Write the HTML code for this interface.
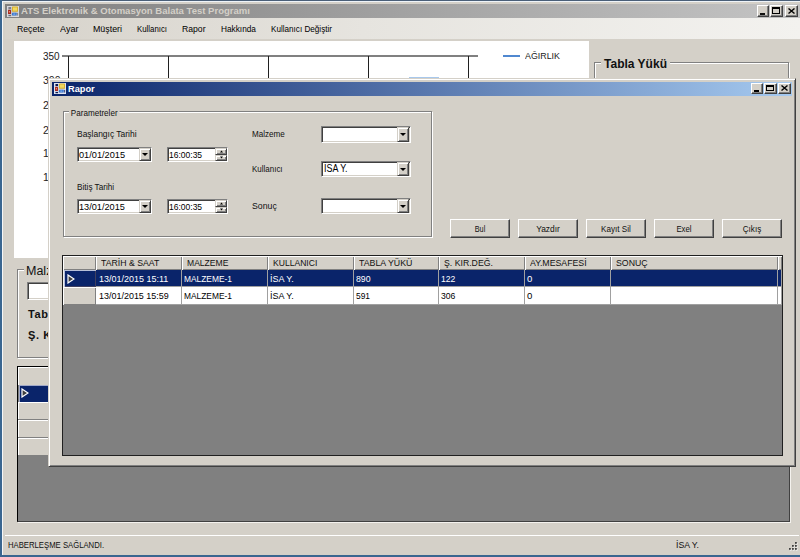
<!DOCTYPE html>
<html><head><meta charset="utf-8">
<style>
*{box-sizing:border-box}
html,body{margin:0;padding:0}
body{width:800px;height:557px;overflow:hidden;position:relative;background:#d4d0c8;font-family:"Liberation Sans",sans-serif;font-size:9px;color:#000}
.a{position:absolute}
.t{position:absolute;white-space:pre;line-height:1}
.sunk{position:absolute;background:#fff;border:1px solid;border-color:#808080 #fff #fff #808080;box-shadow:inset 1px 1px #404040,inset -1px -1px #d4d0c8}
.rais{position:absolute;background:#d4d0c8;border:1px solid;border-color:#fff #404040 #404040 #fff;box-shadow:inset -1px -1px #808080}
.grp{position:absolute;border:1px solid #808080;box-shadow:inset 1px 1px #fff,1px 1px #fff}
.cb{position:absolute;width:16px;height:14px}
.dd{position:absolute;background:#d4d0c8;border:1px solid;border-color:#d4d0c8 #404040 #404040 #d4d0c8;box-shadow:inset 1px 1px #fff,inset -1px -1px #808080}
.tri{position:absolute;width:0;height:0;border-left:3px solid transparent;border-right:3px solid transparent;border-top:3px solid #000}
</style></head><body>

<!-- desktop / frame edges -->
<div class="a" style="left:0;top:0;width:800px;height:1px;background:#4a5f78"></div>
<div class="a" style="left:0;top:0;width:2px;height:557px;background:#3a6690"></div>
<div class="a" style="left:2px;top:1px;width:798px;height:1px;background:#eef3f8"></div>
<div class="a" style="left:2px;top:1px;width:1px;height:555px;background:#f4f6f8"></div>
<div class="a" style="left:0;top:555px;width:800px;height:2px;background:#3a6690"></div>

<!-- main title bar -->
<div class="a" style="left:5px;top:4px;width:795px;height:14px;background:linear-gradient(to right,#808080,#c4c4c4)"></div>
<svg class="a" style="left:7px;top:6px" width="12" height="11" viewBox="0 0 12 11">
 <rect x="0" y="0" width="12" height="11" fill="#c4c4c8"/>
 <rect x="0.5" y="0.5" width="11" height="10" fill="none" stroke="#d8d8dc" stroke-width="1"/>
 <rect x="1.5" y="1" width="2.5" height="2" fill="#7c7c88"/>
 <rect x="1" y="3.8" width="3" height="4.2" rx="0.6" fill="#a82a1c"/>
 <rect x="1.8" y="5" width="1.2" height="1.5" fill="#e88878"/>
 <rect x="1.5" y="9" width="2.5" height="1.2" fill="#6a6a78"/>
 <rect x="5" y="0.5" width="6" height="5.2" rx="0.5" fill="#d8b030"/>
 <rect x="6" y="1.5" width="4" height="3.2" fill="#f0d860"/>
 <rect x="5" y="6.7" width="4.6" height="2.9" rx="0.5" fill="#3a74d0"/>
 <rect x="6.3" y="7.6" width="2" height="1" fill="#90c0f0"/>
 <rect x="10.2" y="7" width="0.9" height="2.5" fill="#7a7a88"/>
</svg>
<div class="t" style="left:21px;top:6px;font-size:9.5px;font-weight:bold;color:#d4d0c8;transform:scaleX(1.003);transform-origin:0 0">ATS Elektronik &amp; Otomasyon Balata Test Programı</div>
<!-- caption buttons -->
<div class="rais" style="left:757px;top:5px;width:12px;height:12px"></div>
<div class="a" style="left:760px;top:13px;width:5px;height:2px;background:#111"></div>
<div class="rais" style="left:770px;top:5px;width:13px;height:12px"></div>
<div class="a" style="left:772px;top:7px;width:8px;height:7px;border:1px solid #000;border-top-width:2px"></div>
<div class="rais" style="left:785px;top:5px;width:13px;height:12px"></div>
<svg class="a" style="left:788px;top:8px" width="7" height="6" viewBox="0 0 7 6"><path d="M0.5 0.5L6.5 5.5M6.5 0.5L0.5 5.5" stroke="#000" stroke-width="1.4"/></svg>

<!-- menu strip -->
<div class="a" style="left:5px;top:18px;width:795px;height:21px;background:linear-gradient(to right,#d6d2ca,#e6e4df 45%,#f3f2ef)"></div>
<div class="t" style="left:17px;top:25px;font-size:9px;transform:scaleX(0.964);transform-origin:0 0">Reçete</div>
<div class="t" style="left:60px;top:25px;font-size:9px;transform:scaleX(1.009);transform-origin:0 0">Ayar</div>
<div class="t" style="left:93px;top:25px;font-size:9px;transform:scaleX(0.983);transform-origin:0 0">Müşteri</div>
<div class="t" style="left:137px;top:25px;font-size:9px;transform:scaleX(0.869);transform-origin:0 0">Kullanıcı</div>
<div class="t" style="left:182px;top:25px;font-size:9px;transform:scaleX(0.959);transform-origin:0 0">Rapor</div>
<div class="t" style="left:221px;top:25px;font-size:9px;transform:scaleX(0.920);transform-origin:0 0">Hakkında</div>
<div class="t" style="left:271px;top:25px;font-size:9px;transform:scaleX(0.903);transform-origin:0 0">Kullanıcı Değiştir</div>

<!-- chart -->
<div class="a" style="left:14px;top:41px;width:575px;height:217px;background:#fff"></div>
<div class="a" style="left:62px;top:55px;width:416px;height:2px;background:#808080"></div>
<div class="a" style="left:68px;top:56px;width:1px;height:170px;background:#202020"></div>
<div class="a" style="left:168px;top:56px;width:1px;height:170px;background:#202020"></div>
<div class="a" style="left:268px;top:56px;width:1px;height:170px;background:#202020"></div>
<div class="a" style="left:368px;top:56px;width:1px;height:170px;background:#202020"></div>
<div class="a" style="left:468px;top:56px;width:1px;height:170px;background:#202020"></div>
<div class="t" style="left:43px;top:51px;font-size:10.5px;color:#222;transform:scaleX(0.947);transform-origin:0 0">350</div>
<div class="t" style="left:43px;top:75px;font-size:10.5px;color:#222">300</div>
<div class="t" style="left:43px;top:100px;font-size:10.5px;color:#222">250</div>
<div class="t" style="left:43px;top:125px;font-size:10.5px;color:#222">200</div>
<div class="t" style="left:43px;top:148px;font-size:10.5px;color:#222">150</div>
<div class="t" style="left:43px;top:172px;font-size:10.5px;color:#222">100</div>
<div class="a" style="left:409px;top:77px;width:30px;height:1px;background:#a8c8ec"></div>
<div class="a" style="left:503px;top:55px;width:17px;height:2px;background:#5088d0"></div>
<div class="t" style="left:525px;top:52px;font-size:9px;color:#222;transform:scaleX(0.985);transform-origin:0 0">AĞIRLIK</div>

<!-- Tabla Yuku group -->
<div class="grp" style="left:594px;top:62px;width:195px;height:300px"></div>
<div class="t" style="left:601px;top:58px;padding:0 3px;background:#d4d0c8;font-size:12px;font-weight:bold;color:#111;transform:scaleX(1.001);transform-origin:0 0">Tabla Yükü</div>

<!-- left group (Malzeme) -->
<div class="grp" style="left:17px;top:269px;width:200px;height:89px"></div>
<div class="t" style="left:24px;top:265px;padding:0 2px;background:#d4d0c8;font-size:12.5px;color:#111">Malzeme</div>
<div class="sunk" style="left:27px;top:282px;width:120px;height:18px"></div>
<div class="t" style="left:28px;top:309px;font-size:11px;letter-spacing:0.6px;font-weight:bold;color:#111">Tabla Yükü</div>
<div class="t" style="left:28px;top:330px;font-size:11px;letter-spacing:0.6px;font-weight:bold;color:#111">Ş. Kır</div>

<!-- main grid -->
<div class="a" style="left:17px;top:366px;width:773px;height:156px;background:#808080;border:1px solid;border-color:#000 #404040 #404040 #000;box-shadow:1px 1px #f4f2ee"></div>
<div class="a" style="left:18px;top:367px;width:771px;height:18px;background:#d4d0c8;box-shadow:inset 1px 1px #fff"></div>
<div class="a" style="left:19px;top:385px;width:770px;height:17px;background:#0a246a;box-shadow:inset 1px 1px #a0a8c8"></div>
<svg class="a" style="left:21px;top:388px" width="8" height="10" viewBox="0 0 8 10"><path d="M1 1L7 5L1 9Z" fill="#404040" stroke="#fff" stroke-width="1.2"/></svg>
<div class="a" style="left:18px;top:402px;width:771px;height:18px;background:#d4d0c8;border-bottom:1px solid #808080;box-shadow:inset 1px 1px #fff"></div>
<div class="a" style="left:18px;top:420px;width:771px;height:18px;background:#d4d0c8;border-bottom:1px solid #808080;box-shadow:inset 1px 1px #fff"></div>
<div class="a" style="left:18px;top:438px;width:771px;height:17px;background:#d4d0c8;box-shadow:inset 1px 1px #fff"></div>

<!-- status bar -->
<div class="a" style="left:5px;top:535px;width:794px;height:1px;background:#fff"></div>
<div class="t" style="left:8px;top:541px;font-size:8.7px;color:#111;transform:scaleX(0.888);transform-origin:0 0">HABERLEŞME SAĞLANDI.</div>
<div class="t" style="left:676px;top:541px;font-size:8.7px;color:#111;transform:scaleX(1.005);transform-origin:0 0">İSA Y.</div>
<svg class="a" style="left:785px;top:540px" width="14" height="12" viewBox="0 0 14 12"><rect x="11" y="3" width="1.5" height="1.5" fill="#fff"/><rect x="8" y="6" width="1.5" height="1.5" fill="#fff"/><rect x="11" y="6" width="1.5" height="1.5" fill="#fff"/><rect x="5" y="9" width="1.5" height="1.5" fill="#fff"/><rect x="8" y="9" width="1.5" height="1.5" fill="#fff"/><rect x="11" y="9" width="1.5" height="1.5" fill="#fff"/><rect x="10" y="2" width="1.8" height="1.8" fill="#404040"/><rect x="7" y="5" width="1.8" height="1.8" fill="#404040"/><rect x="10" y="5" width="1.8" height="1.8" fill="#404040"/><rect x="4" y="8" width="1.8" height="1.8" fill="#404040"/><rect x="7" y="8" width="1.8" height="1.8" fill="#404040"/><rect x="10" y="8" width="1.8" height="1.8" fill="#404040"/></svg>

<!-- ================= DIALOG ================= -->
<div class="a" style="left:48px;top:78px;width:748px;height:389px;background:#d4d0c8;border:1px solid;border-color:#d4d0c8 #404040 #404040 #d4d0c8;box-shadow:inset 1px 1px #fff,inset -1px -1px #808080"></div>
<div class="a" style="left:52px;top:82px;width:740px;height:14px;background:linear-gradient(to right,#0a246a,#a6caf0)"></div>
<svg class="a" style="left:54px;top:83px" width="12" height="11" viewBox="0 0 12 11">
 <rect x="0" y="0" width="12" height="11" fill="#c8d0e0"/>
 <rect x="0.5" y="0.5" width="11" height="10" fill="none" stroke="#e0e4f0" stroke-width="1"/>
 <rect x="1.5" y="1" width="2.5" height="2" fill="#0a1850"/>
 <rect x="1" y="3.8" width="3" height="4.2" rx="0.6" fill="#a82a1c"/>
 <rect x="1.8" y="5" width="1.2" height="1.5" fill="#e88878"/>
 <rect x="1.5" y="9" width="2.5" height="1.2" fill="#0a1850"/>
 <rect x="5" y="0.5" width="6" height="5.2" rx="0.5" fill="#d8b030"/>
 <rect x="6" y="1.5" width="4" height="3.2" fill="#f0d860"/>
 <rect x="5" y="6.7" width="4.6" height="2.9" rx="0.5" fill="#3a74d0"/>
 <rect x="6.3" y="7.6" width="2" height="1" fill="#90c0f0"/>
 <rect x="10.2" y="7" width="0.9" height="2.5" fill="#2a3a70"/>
</svg>
<div class="t" style="left:68px;top:84px;font-size:9.8px;font-weight:bold;color:#fff;transform:scaleX(0.940);transform-origin:0 0">Rapor</div>
<div class="rais" style="left:751px;top:83px;width:12px;height:11px"></div>
<div class="a" style="left:754px;top:90px;width:5px;height:2px;background:#000"></div>
<div class="rais" style="left:764px;top:83px;width:13px;height:11px"></div>
<div class="a" style="left:766px;top:85px;width:8px;height:6px;border:1px solid #000;border-top-width:2px"></div>
<div class="rais" style="left:778px;top:83px;width:13px;height:11px"></div>
<svg class="a" style="left:781px;top:85px" width="7" height="6" viewBox="0 0 7 6"><path d="M0.5 0.5L6.5 5.5M6.5 0.5L0.5 5.5" stroke="#000" stroke-width="1.4"/></svg>

<!-- Parametreler group -->
<div class="grp" style="left:63px;top:111px;width:369px;height:126px"></div>
<div class="t" style="left:69px;top:109px;padding:0 2px;background:#d4d0c8;font-size:8.8px;color:#111;transform:scaleX(0.920);transform-origin:0 0">Parametreler</div>

<div class="t" style="left:77px;top:130px;font-size:9px;color:#111;transform:scaleX(0.940);transform-origin:0 0">Başlangıç Tarihi</div>
<div class="sunk" style="left:77px;top:147px;width:75px;height:15px"></div>
<div class="t" style="left:79px;top:150px;font-size:9.8px;color:#000;transform:scaleX(0.938);transform-origin:0 0">01/01/2015</div>
<div class="dd" style="left:139px;top:148px;width:12px;height:13px"></div>
<div class="tri" style="left:142px;top:153px"></div>
<div class="sunk" style="left:167px;top:147px;width:61px;height:15px"></div>
<div class="t" style="left:169px;top:150px;font-size:9.8px;color:#000;transform:scaleX(0.868);transform-origin:0 0">16:00:35</div>
<div class="dd" style="left:215px;top:148px;width:12px;height:7px"></div>
<div class="dd" style="left:215px;top:155px;width:12px;height:6px"></div>
<svg class="a" style="left:219px;top:150px" width="5" height="3" viewBox="0 0 5 3"><path d="M2.5 0.6L4 2.4H1Z" fill="#000"/></svg>
<svg class="a" style="left:219px;top:156px" width="5" height="3" viewBox="0 0 5 3"><path d="M1 0.6H4L2.5 2.4Z" fill="#000"/></svg>

<div class="t" style="left:77px;top:183px;font-size:9px;color:#111;transform:scaleX(0.910);transform-origin:0 0">Bitiş Tarihi</div>
<div class="sunk" style="left:77px;top:199px;width:75px;height:15px"></div>
<div class="t" style="left:79px;top:202px;font-size:9.8px;color:#000;transform:scaleX(0.936);transform-origin:0 0">13/01/2015</div>
<div class="dd" style="left:139px;top:200px;width:12px;height:13px"></div>
<div class="tri" style="left:142px;top:205px"></div>
<div class="sunk" style="left:167px;top:199px;width:61px;height:15px"></div>
<div class="t" style="left:169px;top:202px;font-size:9.8px;color:#000;transform:scaleX(0.868);transform-origin:0 0">16:00:35</div>
<div class="dd" style="left:215px;top:200px;width:12px;height:7px"></div>
<div class="dd" style="left:215px;top:207px;width:12px;height:6px"></div>
<svg class="a" style="left:219px;top:202px" width="5" height="3" viewBox="0 0 5 3"><path d="M2.5 0.6L4 2.4H1Z" fill="#000"/></svg>
<svg class="a" style="left:219px;top:208px" width="5" height="3" viewBox="0 0 5 3"><path d="M1 0.6H4L2.5 2.4Z" fill="#000"/></svg>

<div class="t" style="left:252px;top:130px;font-size:9px;color:#111;transform:scaleX(0.898);transform-origin:0 0">Malzeme</div>
<div class="sunk" style="left:321px;top:126px;width:90px;height:17px"></div>
<div class="dd" style="left:397px;top:127px;width:12px;height:15px"></div>
<div class="tri" style="left:400px;top:133px"></div>

<div class="t" style="left:252px;top:165px;font-size:9px;color:#111;transform:scaleX(0.886);transform-origin:0 0">Kullanıcı</div>
<div class="sunk" style="left:321px;top:161px;width:90px;height:16px"></div>
<div class="t" style="left:324px;top:164px;font-size:10px;color:#000;transform:scaleX(0.893);transform-origin:0 0">İSA Y.</div>
<div class="dd" style="left:397px;top:162px;width:12px;height:14px"></div>
<div class="tri" style="left:400px;top:168px"></div>

<div class="t" style="left:252px;top:202px;font-size:9px;color:#111;transform:scaleX(0.971);transform-origin:0 0">Sonuç</div>
<div class="sunk" style="left:321px;top:198px;width:90px;height:16px"></div>
<div class="dd" style="left:397px;top:199px;width:12px;height:14px"></div>
<div class="tri" style="left:400px;top:205px"></div>

<!-- buttons -->
<div class="rais" style="left:450px;top:219px;width:60px;height:19px"></div>
<div class="t" style="left:450px;top:225px;width:60px;text-align:center;font-size:9px;color:#111;transform:scaleX(0.807);transform-origin:50% 0">Bul</div>
<div class="rais" style="left:518px;top:219px;width:60px;height:19px"></div>
<div class="t" style="left:518px;top:225px;width:60px;text-align:center;font-size:9px;color:#111;transform:scaleX(0.937);transform-origin:50% 0">Yazdır</div>
<div class="rais" style="left:586px;top:219px;width:60px;height:19px"></div>
<div class="t" style="left:586px;top:225px;width:60px;text-align:center;font-size:9px;color:#111;transform:scaleX(0.901);transform-origin:50% 0">Kayıt Sil</div>
<div class="rais" style="left:654px;top:219px;width:60px;height:19px"></div>
<div class="t" style="left:654px;top:225px;width:60px;text-align:center;font-size:9px;color:#111;transform:scaleX(0.868);transform-origin:50% 0">Exel</div>
<div class="rais" style="left:722px;top:219px;width:60px;height:19px"></div>
<div class="t" style="left:722px;top:225px;width:60px;text-align:center;font-size:9px;color:#111;transform:scaleX(0.897);transform-origin:50% 0">Çıkış</div>

<!-- dialog grid -->
<div class="a" style="left:62px;top:255px;width:721px;height:201px;background:#808080;border:1px solid;border-color:#202020 #202020 #202020 #202020"></div>
<div id="grid">
<div class="a" style="left:63px;top:256px;width:719px;height:14px;background:#d4d0c8"></div>
<div class="a" style="left:63px;top:256px;width:33px;height:14px;background:#d4d0c8;box-shadow:inset 1px 1px #fff,inset -1px -1px #808080"></div>
<div class="a" style="left:96px;top:256px;width:86px;height:14px;background:#d4d0c8;box-shadow:inset 1px 1px #fff,inset -1px -1px #808080"></div>
<div class="t" style="left:101px;top:259px;font-size:9.3px;color:#111;transform:scaleX(0.938);transform-origin:0 0">TARİH &amp; SAAT</div>
<div class="a" style="left:182px;top:256px;width:86px;height:14px;background:#d4d0c8;box-shadow:inset 1px 1px #fff,inset -1px -1px #808080"></div>
<div class="t" style="left:187px;top:259px;font-size:9.3px;color:#111;transform:scaleX(0.921);transform-origin:0 0">MALZEME</div>
<div class="a" style="left:268px;top:256px;width:86px;height:14px;background:#d4d0c8;box-shadow:inset 1px 1px #fff,inset -1px -1px #808080"></div>
<div class="t" style="left:273px;top:259px;font-size:9.3px;color:#111;transform:scaleX(0.922);transform-origin:0 0">KULLANICI</div>
<div class="a" style="left:354px;top:256px;width:85px;height:14px;background:#d4d0c8;box-shadow:inset 1px 1px #fff,inset -1px -1px #808080"></div>
<div class="t" style="left:359px;top:259px;font-size:9.3px;color:#111;transform:scaleX(0.945);transform-origin:0 0">TABLA YÜKÜ</div>
<div class="a" style="left:439px;top:256px;width:86px;height:14px;background:#d4d0c8;box-shadow:inset 1px 1px #fff,inset -1px -1px #808080"></div>
<div class="t" style="left:444px;top:259px;font-size:9.3px;color:#111;transform:scaleX(0.937);transform-origin:0 0">Ş. KIR.DEĞ.</div>
<div class="a" style="left:525px;top:256px;width:86px;height:14px;background:#d4d0c8;box-shadow:inset 1px 1px #fff,inset -1px -1px #808080"></div>
<div class="t" style="left:530px;top:259px;font-size:9.3px;color:#111;transform:scaleX(0.942);transform-origin:0 0">AY.MESAFESİ</div>
<div class="a" style="left:611px;top:256px;width:167px;height:14px;background:#d4d0c8;box-shadow:inset 1px 1px #fff,inset -1px -1px #808080"></div>
<div class="t" style="left:616px;top:259px;font-size:9.3px;color:#111;transform:scaleX(0.941);transform-origin:0 0">SONUÇ</div>
<div class="a" style="left:778px;top:256px;width:4px;height:14px;background:#d4d0c8;box-shadow:inset 1px 1px #fff,inset -1px -1px #808080"></div>
<div class="a" style="left:63px;top:270px;width:33px;height:17px;background:#0a246a;box-shadow:inset 1px 0 #f0f0f0,inset 2px 1px #b8c0d8,inset -1px -1px #404060"></div>
<svg class="a" style="left:67px;top:274px" width="8" height="10" viewBox="0 0 8 10"><path d="M1 1L7 5L1 9Z" fill="#404040" stroke="#fff" stroke-width="1.2"/></svg>
<div class="a" style="left:63px;top:287px;width:33px;height:18px;background:#d4d0c8;box-shadow:inset 1px 1px #fff,inset -1px -1px #808080"></div>
<div class="a" style="left:96px;top:270px;width:686px;height:17px;background:#0a246a"></div>
<div class="a" style="left:96px;top:287px;width:686px;height:18px;background:#fff"></div>
<div class="a" style="left:96px;top:286px;width:686px;height:1px;background:#a0a0a0"></div>
<div class="a" style="left:96px;top:304px;width:686px;height:1px;background:#a0a0a0"></div>
<div class="a" style="left:181px;top:270px;width:1px;height:35px;background:#a0a0a0"></div>
<div class="a" style="left:267px;top:270px;width:1px;height:35px;background:#a0a0a0"></div>
<div class="a" style="left:353px;top:270px;width:1px;height:35px;background:#a0a0a0"></div>
<div class="a" style="left:438px;top:270px;width:1px;height:35px;background:#a0a0a0"></div>
<div class="a" style="left:524px;top:270px;width:1px;height:35px;background:#a0a0a0"></div>
<div class="a" style="left:610px;top:270px;width:1px;height:35px;background:#a0a0a0"></div>
<div class="a" style="left:777px;top:270px;width:1px;height:35px;background:#a0a0a0"></div>
<div class="a" style="left:781px;top:270px;width:1px;height:35px;background:#a0a0a0"></div>
<div class="t" style="left:99px;top:274px;font-size:9.6px;color:#fff;transform:scaleX(0.937);transform-origin:0 0">13/01/2015 15:11</div>
<div class="t" style="left:99px;top:291px;font-size:9.6px;color:#000;transform:scaleX(0.934);transform-origin:0 0">13/01/2015 15:59</div>
<div class="t" style="left:184px;top:274px;font-size:9.6px;color:#fff;transform:scaleX(0.874);transform-origin:0 0">MALZEME-1</div>
<div class="t" style="left:184px;top:291px;font-size:9.6px;color:#000;transform:scaleX(0.874);transform-origin:0 0">MALZEME-1</div>
<div class="t" style="left:270px;top:274px;font-size:9.6px;color:#fff;transform:scaleX(0.938);transform-origin:0 0">İSA Y.</div>
<div class="t" style="left:270px;top:291px;font-size:9.6px;color:#000;transform:scaleX(0.938);transform-origin:0 0">İSA Y.</div>
<div class="t" style="left:356px;top:274px;font-size:9.6px;color:#fff;transform:scaleX(0.912);transform-origin:0 0">890</div>
<div class="t" style="left:356px;top:291px;font-size:9.6px;color:#000;transform:scaleX(0.874);transform-origin:0 0">591</div>
<div class="t" style="left:441px;top:274px;font-size:9.6px;color:#fff;transform:scaleX(0.899);transform-origin:0 0">122</div>
<div class="t" style="left:441px;top:291px;font-size:9.6px;color:#000;transform:scaleX(0.899);transform-origin:0 0">306</div>
<div class="t" style="left:527px;top:274px;font-size:9.6px;color:#fff">0</div>
<div class="t" style="left:527px;top:291px;font-size:9.6px;color:#000">0</div>
</div><!--endgrid-->

</body></html>
